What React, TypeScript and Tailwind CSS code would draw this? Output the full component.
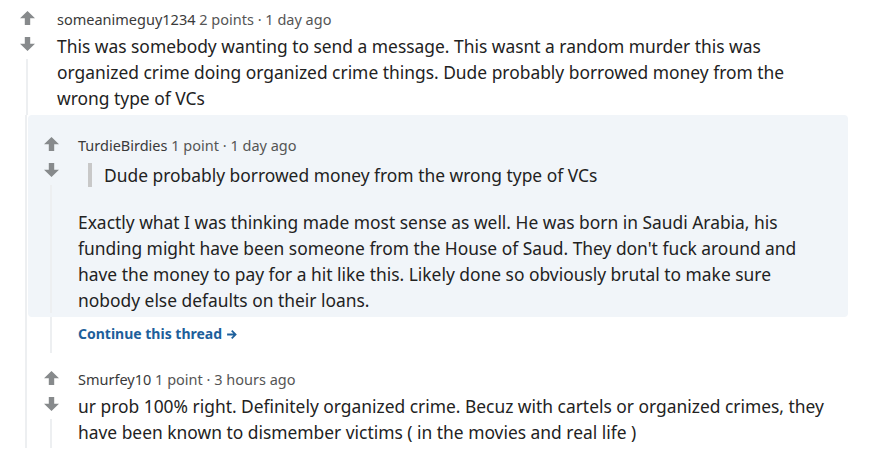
import React from "react";

const ArrowUp = () => (
    <svg width="15" height="14" viewBox="0 0 15 14" className="block">
        <path d="M7.5 0 L15 7.2 L10.2 7.2 L10.2 14 L4.8 14 L4.8 7.2 L0 7.2 Z" fill="#878a8c" />
    </svg>
);

const ArrowDown = () => (
    <svg width="15" height="14" viewBox="0 0 15 14" className="block">
        <path d="M7.5 14 L15 6.8 L10.2 6.8 L10.2 0 L4.8 0 L4.8 6.8 L0 6.8 Z" fill="#878a8c" />
    </svg>
);

// arrows + the thread line under them
const VoteColumn = ({ line = true }: { line?: boolean }) => (
    <div className="flex flex-col items-center w-[14px] shrink-0">
        <div className="pt-[1px]"><ArrowUp /></div>
        <div className="mt-[12px]"><ArrowDown /></div>
        {line && <div className="flex-1 w-[2px] bg-[#edeff1] mt-[8px]" />}
    </div>
);

const Meta = ({ user, points, time }: { user: string; points: string; time: string }) => (
    <div className="text-[14.5px] leading-[18px] text-[#555]">
        <span className="text-[#3a3a3a]">{user}</span> {points} · {time}
    </div>
);

export default function App() {
    return (
        <div className="bg-white w-[887px] h-[470px] pt-[10px] text-[#222]" style={{ fontFamily: '"Noto Sans", "Open Sans", sans-serif' }}>
            {/* top comment */}
            <div className="flex pl-[20px]">
                <VoteColumn />
                <div className="ml-[23px] w-[772px]">
                    <Meta user="someanimeguy1234" points="2 points" time="1 day ago" />
                    <p className="mt-[5px] text-[17.4px] leading-[26px]">
                        This was somebody wanting to send a message. This wasnt a random murder this was organized crime doing organized crime things. Dude probably borrowed money from the wrong type of VCs
                    </p>
                    <div className="h-[4px]" />
                </div>
            </div>

            {/* replies */}
            <div className="flex">
                <div className="w-[28px] shrink-0 flex justify-end">
                    <div className="w-[2px] bg-[#edeff1] mr-[1px]" />
                </div>
                <div className="w-[820px]">
                    {/* highlighted reply */}
                    <div className="bg-[#f1f5f9] rounded-[4px] flex pl-[16px] pt-[21px] pb-[4px]">
                        <VoteColumn />
                        <div className="ml-[20px] w-[756px]">
                            <Meta user="TurdieBirdies" points="1 point" time="1 day ago" />
                            <div className="mt-[9px] flex">
                                <div className="w-[4px] h-[24px] bg-[#c8c8c8] ml-[10px]" />
                                <p className="ml-[12px] text-[17.4px] leading-[26px] -mt-[1px]">
                                    Dude probably borrowed money from the wrong type of VCs
                                </p>
                            </div>
                            <p className="mt-[21px] text-[17.4px] leading-[26px]">
                                Exactly what I was thinking made most sense as well. He was born in Saudi Arabia, his funding might have been someone from the House of Saud. They don't fuck around and have the money to pay for a hit like this. Likely done so obviously brutal to make sure nobody else defaults on their loans.
                            </p>
                        </div>
                    </div>
                    <div className="flex pl-[16px]">
                        <div className="w-[14px] shrink-0 flex justify-center">
                            <div className="w-[2px] bg-[#edeff1]" />
                        </div>
                        <div className="ml-[20px] pt-[8px] pb-[10px]">
                            <a className="flex items-center gap-[4px] text-[14px] leading-[18px] font-bold text-[#1d5f9b]">
                                Continue this thread
                                <svg width="11" height="11" viewBox="0 0 10 10">
                                    <path d="M1 5 H8.5 M5.2 1.5 L8.7 5 L5.2 8.5" stroke="#1d5f9b" strokeWidth="1.6" fill="none" />
                                </svg>
                            </a>
                        </div>
                    </div>

                    {/* second reply */}
                    <div className="flex pl-[16px] pt-[17px]">
                        <VoteColumn />
                        <div className="ml-[20px] w-[756px]">
                            <Meta user="Smurfey10" points="1 point" time="3 hours ago" />
                            <p className="mt-[5px] text-[17.4px] leading-[26px]">
                                ur prob 100% right. Definitely organized crime. Becuz with cartels or organized crimes, they have been known to dismember victims ( in the movies and real life )
                            </p>
                            <div className="h-[3px]" />
                        </div>
                    </div>
                </div>
            </div>
        </div>
    );
}
